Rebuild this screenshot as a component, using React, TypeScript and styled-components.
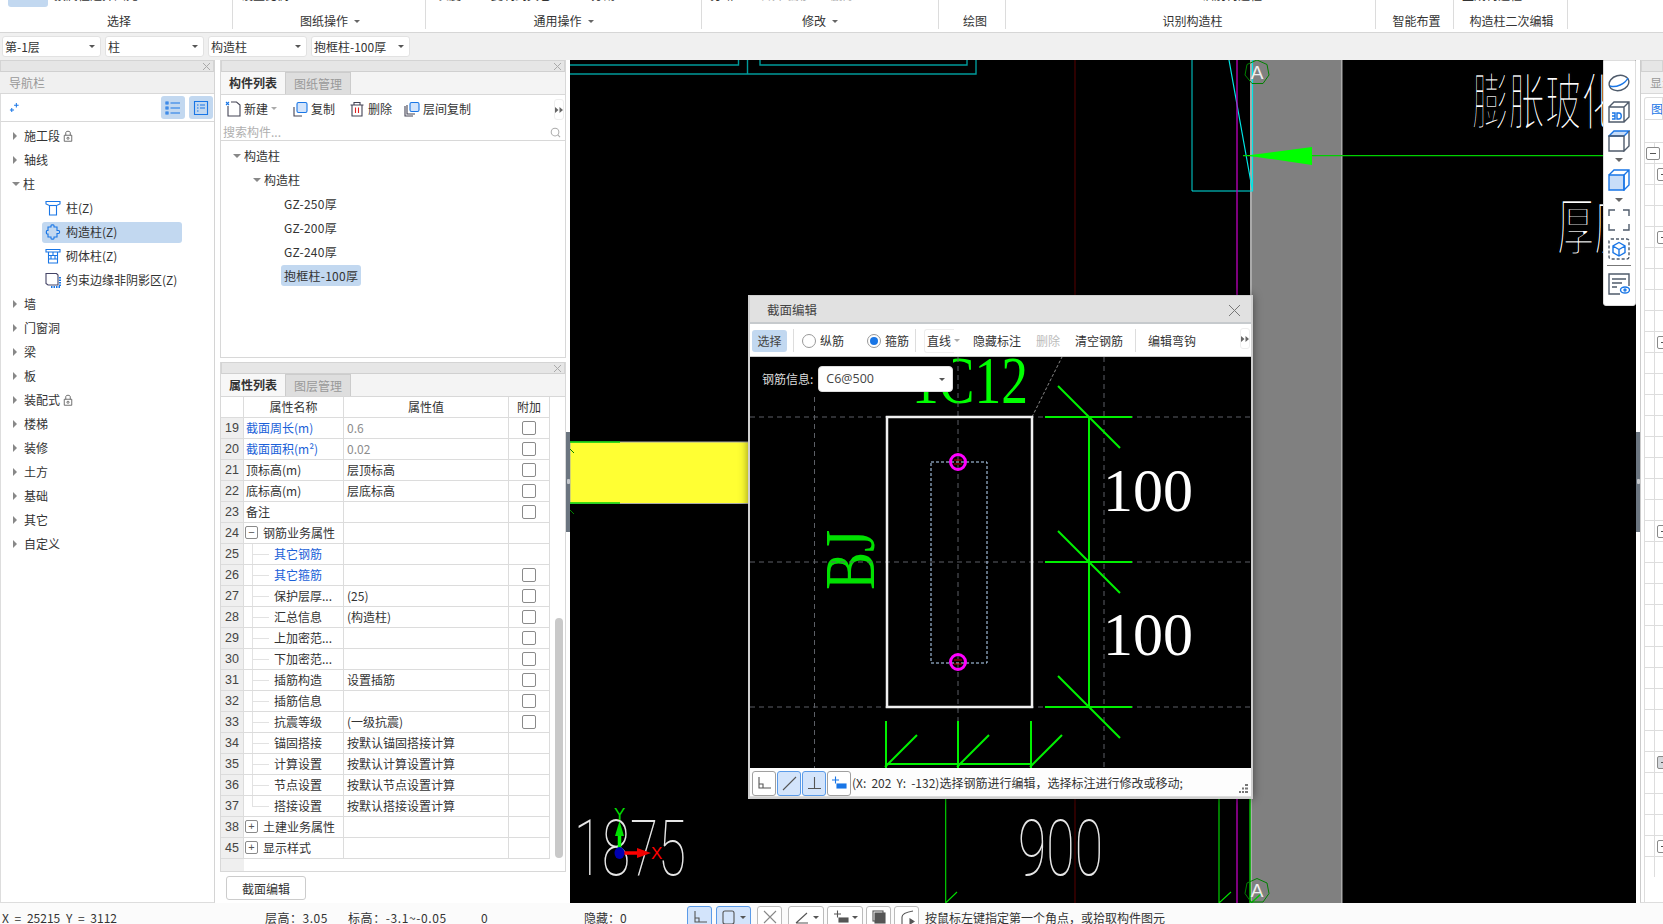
import React from "react";
import styled, { createGlobalStyle } from "styled-components";

const FONT = `"Noto Sans CJK SC", "Liberation Sans", sans-serif`;
const BLUE = "#1976e6";
const SLATE = "#4f5b6b";

const Global = createGlobalStyle`
  html, body { margin: 0; padding: 0; height: 100%; overflow: hidden; background: #fff; }
  #root { height: 100%; }
  * { box-sizing: border-box; }
`;

const Page = styled.div`
  width: 1663px; height: 924px; display: flex; flex-direction: column; overflow: hidden;
  font: 12px/18px ${FONT}; color: #333; background: #fff;
`;

/* ribbon */
const Ribbon = styled.div`
  height: 33px; flex: none; display: flex; background: #fff; border-bottom: 1px solid #d6d6d6;
  align-items: flex-start;
`;
const RibbonGroup = styled.div<{ $w: number }>`
  width: ${(p) => p.$w}px; height: 29px; flex: none; display: flex; flex-direction: column;
  border-right: 1px solid #dcdcdc;
`;
const RibbonClip = styled.div`
  height: 10px; overflow: hidden; display: flex; align-items: flex-start; flex: none;
`;
const RibbonFragment = styled.span<{ $l: number; $mute?: boolean }>`
  margin-left: ${(p) => p.$l}px; margin-top: -14px; line-height: 18px; white-space: nowrap;
  color: ${(p) => (p.$mute ? "#aaa" : "#333")}; height: 18px;
`;
const RibbonActive = styled.span`
  width: 40px; height: 7px; margin-left: 8px; background: #c2d8f0; border-radius: 0 0 3px 3px; flex: none;
`;
const RibbonLabel = styled.div<{ $nudge: number }>`
  height: 22px; line-height: 22px; text-align: center; color: #333; white-space: nowrap;
  display: flex; align-items: center; justify-content: center; gap: 6px;
  padding-left: ${(p) => p.$nudge}px;
`;
const Caret = styled.i<{ $c?: string; $s?: number }>`
  display: inline-block; width: 0; height: 0; flex: none;
  border-left: ${(p) => p.$s ?? 3}px solid transparent;
  border-right: ${(p) => p.$s ?? 3}px solid transparent;
  border-top: ${(p) => p.$s ?? 3}px solid ${(p) => p.$c ?? "#666"};
`;

/* selector bar */
const SelectBar = styled.div`
  height: 27px; flex: none; background: #f0f0f0; display: flex; gap: 4px; padding: 3px 0 3px 2px;
`;
const BarSelect = styled.div`
  width: 99px; height: 21px; background: #fff; border: 1px solid #e2e2e2; border-radius: 3px;
  display: flex; align-items: center; justify-content: space-between; padding: 0 5px 0 2px; color: #333;
`;

/* main */
const Main = styled.div`
  height: 843px; flex: none; display: flex; background: #fff;
`;
const PanelHead = styled.div`
  height: 12px; flex: none; background: #e6e6e6; border: 1px solid #d4d4d4; border-bottom-color: #d0d0d0;
  display: flex; align-items: center; justify-content: flex-end; padding-right: 3px;
`;
const CloseX = styled.svg`
  width: 7px; height: 7px; stroke: #aaa; stroke-width: 1; fill: none;
`;

/* navigator */
const Nav = styled.aside`
  width: 215px; flex: none; display: flex; flex-direction: column; border-right: 1px solid #d4d4d4;
  border-bottom: 1px solid #ddd;
`;
const NavTitle = styled.div`
  height: 22px; flex: none; background: #f0f0f0; color: #999; padding-left: 9px; line-height: 21px;
  border-bottom: 1px solid #d8d8d8;
`;
const NavTools = styled.div`
  height: 28px; flex: none; display: flex; align-items: center; padding: 0 1px 0 8px; gap: 4px;
  border-bottom: 1px solid #d8d8d8; border-left: 1px solid #ddd;
`;
const NavToolBtn = styled.div`
  width: 24px; height: 23px; background: #c2d8f0; border-radius: 3px; display: flex;
  align-items: center; justify-content: center;
`;
const Spacer = styled.div`flex: 1;`;
const NavTree = styled.div`
  padding-top: 2px; flex: 1; border-left: 1px solid #ddd;
`;
const NavRow = styled.div`
  height: 24px; display: flex; align-items: center; padding-left: 11px; white-space: nowrap; color: #333;
`;
const TreeArrow = styled.i<{ $open?: boolean }>`
  display: inline-block; width: 0; height: 0; flex: none;
  ${(p) =>
    p.$open
      ? `border-left: 4px solid transparent; border-right: 4px solid transparent; border-top: 4px solid #888; margin-right: 3px;`
      : `border-top: 4px solid transparent; border-bottom: 4px solid transparent; border-left: 4px solid #888; margin-right: 7px; margin-left: 1px;`}
`;
const NavLeafRow = styled.div`
  height: 24px; display: flex; align-items: center; padding-left: 41px;
`;
const NavLeaf = styled.div<{ $on?: boolean }>`
  width: 140px; height: 21px; display: flex; align-items: center; gap: 5px;
  padding-left: 3px; border-radius: 3px; white-space: nowrap;
  background: ${(p) => (p.$on ? "#c2d8f0" : "transparent")};
`;

/* middle */
const Middle = styled.section`
  width: 346px; margin-left: 5px; flex: none; display: flex; flex-direction: column;
`;
const ListPanel = styled.div`
  height: 298px; flex: none; display: flex; flex-direction: column;
  border: 1px solid #d8d8d8; border-top: 0;
`;
const Tabs = styled.div`
  height: 23px; flex: none; display: flex; border-bottom: 1px solid #d8d8d8; background: #f4f4f4;
`;
const Tab = styled.div<{ $on?: boolean }>`
  width: 65px; text-align: center; line-height: 21px;
  font-weight: ${(p) => (p.$on ? 700 : 400)};
  color: ${(p) => (p.$on ? "#333" : "#999")};
  background: ${(p) => (p.$on ? "#f7f7f7" : "#dedede")};
  border-right: 1px solid #ccc; ${(p) => (p.$on ? "" : "border-top: 1px solid #ccc;")}
`;
const ListTools = styled.div`
  height: 27px; flex: none; display: flex; align-items: center; padding-left: 4px;
  position: relative;
`;
const ToolItem = styled.div<{ $w: number }>`
  width: ${(p) => p.$w}px; display: flex; align-items: center; gap: 3px; flex: none; white-space: nowrap;
`;
const MoreBtn = styled.div`
  position: absolute; right: 1px; top: 4px; width: 10px; height: 21px; border: 1px solid #eee;
  border-radius: 3px; display: flex; align-items: center; justify-content: center; gap: 0; background: #fff;
`;
const MoreGlyph = styled.svg`
  width: 8px; height: 6px; fill: #666;
`;
const SearchRow = styled.div`
  height: 19px; flex: none; display: flex; align-items: center; justify-content: space-between;
  padding: 2px 4px 0 2px; border-bottom: 1px solid #d8d8d8; color: #b0b0b0;
`;
const CompTree = styled.div`
  flex: 1; padding-top: 3px;
`;
const CompRow = styled.div<{ $indent: number }>`
  height: 24px; display: flex; align-items: center; padding-left: ${(p) => p.$indent}px;
`;
const CompLabel = styled.span<{ $on?: boolean }>`
  height: 21px; line-height: 21px; padding: 0 3px; border-radius: 3px; letter-spacing: 0.25px; margin-top: -1px;
  background: ${(p) => (p.$on ? "#c2d8f0" : "transparent")};
`;

const PropPanel = styled.div`
  margin-top: 4px; height: 510px; flex: none; display: flex; flex-direction: column;
  border: 1px solid #d8d8d8; border-top: 0;
`;
const PropBody = styled.div`
  flex: 1; display: flex; min-height: 0;
`;
const PropTableWrap = styled.div`
  width: 329px; flex: none; display: flex; flex-direction: column;
`;
const PropGrid = styled.div`
  display: grid; grid-template-columns: 23px 100px 165px 41px;
`;
const Cell = styled.div`
  height: 21px; border-bottom: 1px solid #dcdcdc; border-right: 1px solid #dcdcdc;
  display: flex; align-items: center; white-space: nowrap; position: relative;
`;
const HeadCell = styled(Cell)`
  height: 20.5px; justify-content: center; color: #333;
`;
const NoCell = styled(Cell)`
  background: #efefef; justify-content: center; color: #444; font-size: 12.5px;
  font-family: "Liberation Sans", sans-serif;
`;
const NameCell = styled(Cell)<{ $level: number; $link?: boolean; $branch?: "mid" | "end" }>`
  padding-left: ${(p) => (p.$level === 2 ? 30 : 2)}px;
  color: ${(p) => (p.$link ? "#1a5fd8" : "#333")};
  ${(p) =>
    p.$branch
      ? `&::before { content: ""; position: absolute; left: 8px; top: 0; width: 17px;
         height: ${p.$branch === "end" ? "10px" : "100%"}; border-left: 1px solid #e2e2e2; }
         &::after { content: ""; position: absolute; left: 8px; top: 10px; width: 17px; border-top: 1px solid #e2e2e2; }`
      : ""}
`;
const ValueCell = styled(Cell)<{ $mute?: boolean }>`
  padding-left: 3px; color: ${(p) => (p.$mute ? "#8c8c8c" : "#333")};
`;
const CheckCell = styled(Cell)`
  justify-content: center;
`;
const CheckBox = styled.span`
  width: 14px; height: 14px; border: 1px solid #8a8a8a; border-radius: 2px; background: #fff;
`;
const ExpBox = styled.span`
  width: 13px; height: 13px; border: 1px solid #8a8a8a; border-radius: 2px; margin: 0 5px 0 -1px;
  display: flex; align-items: center; justify-content: center; font: 11px/11px "Liberation Sans", sans-serif;
  color: #555; flex: none;
`;
const PropFiller = styled.div`
  flex: 1;
`;
const PropFillerNo = styled.div`
  width: 23px; height: 100%; background: #efefef;
`;
const ScrollTrack = styled.div`
  width: 16px; flex: none; position: relative;
`;
const ScrollThumb = styled.div`
  position: absolute; left: 5px; width: 8px; top: 221px; height: 240px; background: #c9c9c9; border-radius: 4px;
`;
const EditBtn = styled.button`
  width: 80px; height: 24px; margin: 4px 0 0 6px; background: #fff; border: 1px solid #ccc; border-radius: 3px;
  font: 12px ${FONT}; color: #333; padding: 0;
`;

/* canvas */
const Splitter = styled.div`
  width: 4px; flex: none; display: flex; align-items: center;
`;
const SplitGrip = styled.div`
  width: 4px; height: 100px; background: #6b7580; display: flex; align-items: center; justify-content: center;
`;
const GripDot = styled.span`
  width: 3px; height: 5px; background: #c5c9cd; border-radius: 1px;
`;
const Canvas = styled.div`
  width: 1066px; flex: none; position: relative; background: #000; overflow: hidden;
`;
const CadLayer = styled.svg`
  position: absolute; left: 0; top: 0; width: 1066px; height: 843px; display: block;
`;
const CadThin = styled.text`
  font-family: Roboto, "Liberation Sans", sans-serif; font-weight: 100; fill: #e6e6e6;
`;
const CadCjk = styled.text`
  font-family: "Noto Sans CJK SC", sans-serif; fill: #fff; stroke: #000; stroke-width: 2.7px;
`;
const CadA = styled.text`
  font-family: "Liberation Sans", sans-serif; fill: #eee; font-size: 19px; text-anchor: middle;
`;
const AxisLabel = styled.text<{ $c: string }>`
  font-family: "Liberation Sans", sans-serif; fill: ${(p) => p.$c}; font-size: 17px;
`;

/* floating view tools */
const ViewTools = styled.div`
  position: absolute; right: 0; top: 0; width: 33px; height: 246px; background: #fff;
  border-radius: 0 0 3px 3px; border: 1px solid #ddd; display: flex; flex-direction: column; align-items: center;
  padding: 11px 1px 0 0; gap: 0;
`;
const ViewIcon = styled.svg<{ $mb: number; $accent?: boolean }>`
  width: 22px; height: 22px; margin-bottom: ${(p) => p.$mb}px; flex: none;
  fill: none; stroke: ${(p) => (p.$accent ? BLUE : SLATE)}; stroke-width: 1.4;
`;
const ViewCaret = styled.div`
  height: 5px; margin-bottom: 7px; display: flex; align-items: center;
`;
const ViewRule = styled.div`
  width: 24px; border-top: 1px solid #777; margin: 0 0 7px;
`;

/* dialog */
const Dialog = styled.div`
  position: absolute; left: 178px; top: 235px; width: 505px; height: 504px; display: flex; flex-direction: column;
  border: 2px solid #cfcfcf; border-top-width: 1px; border-right-width: 2px; background: #fff;
  box-shadow: 0 0 9px rgba(0, 0, 0, 0.45);
`;
const DialogTitle = styled.div`
  height: 28px; flex: none; background: #e1e1e1; display: flex; align-items: center; justify-content: space-between;
  padding: 2px 11px 0 17px; font-size: 12.5px; color: #444; border-bottom: 2px solid #c6cacd;
`;
const DialogClose = styled.svg`
  width: 11px; height: 11px; stroke: #777; stroke-width: 1; fill: none;
`;
const DialogTools = styled.div`
  height: 33px; flex: none; background: #fff; display: flex; align-items: center; position: relative; padding: 1px 0 0 2px;
  border-bottom: 1px solid #ccc;
`;
const DlgSelect = styled.div`
  width: 35px; height: 22px; background: #c2d8f0; border-radius: 3px; text-align: center; line-height: 22px; color: #444;
`;
const DlgSep = styled.div<{ $l: number }>`
  width: 1px; height: 23px; background: #ddd; margin-left: ${(p) => p.$l}px; flex: none;
`;
const Radio = styled.span<{ $on?: boolean; $l: number }>`
  width: 14px; height: 14px; border: 1px solid #999; border-radius: 50%; margin-left: ${(p) => p.$l}px;
  margin-right: 4px; display: flex; align-items: center; justify-content: center; flex: none; background: #fff;
  &::after { content: ""; width: 8px; height: 8px; border-radius: 50%; background: ${(p) => (p.$on ? BLUE : "transparent")}; }
`;
const DlgText = styled.span<{ $l?: number; $off?: boolean }>`
  margin-left: ${(p) => p.$l ?? 0}px; white-space: nowrap; color: ${(p) => (p.$off ? "#bbb" : "#333")}; flex: none;
`;
const DlgLineBtn = styled.div`
  margin-left: 8px; width: 30px; height: 24px; border: 1px solid #eee; border-right: 0; border-radius: 3px 0 0 3px;
  display: flex; align-items: center; padding-left: 2px; gap: 3px; white-space: nowrap; flex: none; overflow: visible;
`;
const DlgArea = styled.div`
  flex: 1; background: #000; position: relative; min-height: 0;
`;
const DlgLayer = styled.svg`
  position: absolute; left: 0; top: 0; width: 501px; height: 411px; display: block;
`;
const RebarInfo = styled.div`
  position: absolute; left: 0; top: 0; padding: 9px 0 0 12px; background: #000;
  display: flex; align-items: center; gap: 5px; color: #ddd;
`;
const RebarSelect = styled.div`
  width: 135px; height: 26px; background: #fff; border-radius: 4px; border: 1px solid #ddd; color: #444;
  display: flex; align-items: center; justify-content: space-between; padding: 0 7px; font-size: 12.5px;
  font-family: "Open Sans", "Liberation Sans", sans-serif;
`;
const DlgStatus = styled.div`
  height: 29px; flex: none; background: #fdfdfd; display: flex; align-items: center; padding: 2px 2px 0 2px; gap: 1px;
  position: relative; border-bottom: 1px solid #ddd;
`;
const SnapBtn = styled.div<{ $on?: boolean }>`
  width: 24px; height: 25px; border: 1px solid ${(p) => (p.$on ? "#5b9be8" : "#a0a0a0")}; border-radius: 3px;
  background: ${(p) => (p.$on ? "#d3e4fb" : "#fff")}; display: flex; align-items: center; justify-content: center; flex: none;
`;
const SnapText = styled.span`
  white-space: nowrap; color: #333; word-spacing: 2.5px;
`;
const Grip = styled.svg`
  position: absolute; right: 3px; bottom: 3px; width: 9px; height: 9px; fill: #777;
`;

/* right panel */
const RightPanel = styled.aside`
  flex: 1; display: flex; flex-direction: column; border-left: 1px solid #ccc; overflow: hidden; border-bottom: 1px solid #ddd;
`;
const RightTitle = styled.div`
  height: 22px; flex: none; background: #f0f0f0; color: #999; padding-left: 9px; line-height: 21px; white-space: nowrap;
  border-bottom: 1px solid #d8d8d8;
`;
const RightTab = styled.div`
  margin: 3px 0 0 3px; height: 22px; flex: none; border: 1px solid #ddd; border-bottom: 0; border-radius: 3px 0 0 0;
  color: ${BLUE}; padding-left: 6px; line-height: 22px; white-space: nowrap; overflow: hidden;
`;
const RightBody = styled.div`
  flex: 1; margin-left: 3px; border-left: 1px solid #ddd; border-top: 1px solid #ddd; padding-top: 22px; overflow: hidden;
`;
const RightRow = styled.div`
  height: 21px; border-top: 1px solid #ddd; position: relative; display: flex; align-items: center;
  &::before { content: ""; position: absolute; left: 9px; top: 0; bottom: 0; border-left: 1px solid #ddd; }
`;
const RightBox = styled.span<{ $level: number; $on?: boolean }>`
  width: 14px; height: 13px; flex: none; position: relative; z-index: 1; margin-left: ${(p) => (p.$level ? 12 : 1)}px;
  border: 1px solid #8a8a8a; border-radius: 2px; background: ${(p) => (p.$on ? "#d5d8dc" : "#fff")};
  display: flex; align-items: center; justify-content: center;
  &::after { content: ""; width: 6px; border-top: 1px solid #555; }
`;

/* status bar */
const StatusBar = styled.footer`
  height: 21px; flex: none; background: #fbfbfb; display: flex; position: relative; overflow: hidden; align-items: flex-start;
`;
const StatusText = styled.span<{ $w: number; $l?: number; $words?: number; $track?: number }>`
  width: ${(p) => p.$w}px; flex: none; white-space: nowrap; line-height: 30px; color: #333;
  padding-left: ${(p) => p.$l ?? 0}px; word-spacing: ${(p) => p.$words ?? 0}px;
  letter-spacing: ${(p) => p.$track ?? 0}px;
`;
const StatusBtn = styled.div<{ $w: number; $on?: boolean; $l: number }>`
  width: ${(p) => p.$w}px; height: 24px; margin: 3px 0 0 ${(p) => p.$l}px; flex: none; border-radius: 3px;
  border: 1px solid ${(p) => (p.$on ? "#5b9be8" : "#bbb")};
  background: ${(p) => (p.$on ? "#d3e4fb" : "#fff")};
  display: flex; align-items: center; justify-content: center; gap: 3px; padding-bottom: 2px;
`;
const SmallIcon = styled.svg<{ $c?: string; $size?: number }>`
  width: ${(p) => p.$size ?? 16}px; height: ${(p) => p.$size ?? 16}px; flex: none; fill: none;
  stroke: ${(p) => p.$c ?? "#555"}; stroke-width: 1.1;
`;
const LockWrap = styled.span`
  display: inline-flex; margin-left: 2px;
`;

/* ---------- data ---------- */
const navTop = ["施工段", "轴线"];
const navBottom = ["墙", "门窗洞", "梁", "板", "装配式", "楼梯", "装修", "土方", "基础", "其它", "自定义"];
type PropRow = {
  no: number; name: string; value?: string; check?: boolean; level: 1 | 2; link?: boolean; mute?: boolean;
  exp?: "+" | "-"; branch?: "mid" | "end";
};
const props: PropRow[] = [
  { no: 19, name: "截面周长(m)", value: "0.6", check: true, level: 1, link: true, mute: true },
  { no: 20, name: "截面面积(m²)", value: "0.02", check: true, level: 1, link: true, mute: true },
  { no: 21, name: "顶标高(m)", value: "层顶标高", check: true, level: 1 },
  { no: 22, name: "底标高(m)", value: "层底标高", check: true, level: 1 },
  { no: 23, name: "备注", check: true, level: 1 },
  { no: 24, name: "钢筋业务属性", level: 1, exp: "-" },
  { no: 25, name: "其它钢筋", level: 2, link: true, branch: "mid" },
  { no: 26, name: "其它箍筋", check: true, level: 2, link: true, branch: "mid" },
  { no: 27, name: "保护层厚...", value: "(25)", check: true, level: 2, branch: "mid" },
  { no: 28, name: "汇总信息", value: "(构造柱)", check: true, level: 2, branch: "mid" },
  { no: 29, name: "上加密范...", check: true, level: 2, branch: "mid" },
  { no: 30, name: "下加密范...", check: true, level: 2, branch: "mid" },
  { no: 31, name: "插筋构造", value: "设置插筋", check: true, level: 2, branch: "mid" },
  { no: 32, name: "插筋信息", check: true, level: 2, branch: "mid" },
  { no: 33, name: "抗震等级", value: "(一级抗震)", check: true, level: 2, branch: "mid" },
  { no: 34, name: "锚固搭接", value: "按默认锚固搭接计算", level: 2, branch: "mid" },
  { no: 35, name: "计算设置", value: "按默认计算设置计算", level: 2, branch: "mid" },
  { no: 36, name: "节点设置", value: "按默认节点设置计算", level: 2, branch: "mid" },
  { no: 37, name: "搭接设置", value: "按默认搭接设置计算", level: 2, branch: "end" },
  { no: 38, name: "土建业务属性", level: 1, exp: "+" },
  { no: 45, name: "显示样式", level: 1, exp: "+" },
];
const ribbon: { w: number; label: string; nudge: number; caret?: boolean; bits: { l: number; t: string; m?: boolean }[]; active?: boolean }[] = [
  { w: 233, label: "选择", nudge: 6, active: true, bits: [{ l: 6, t: "按属性选择图元" }] },
  { w: 193, label: "图纸操作", nudge: 2, caret: true, bits: [{ l: 8, t: "设置比例" }] },
  { w: 276, label: "通用操作", nudge: 0, caret: true, bits: [{ l: 11, t: "长度" }, { l: 30, t: "复制到其它" }, { l: 40, t: "分割" }] },
  { w: 237, label: "修改", nudge: 0, caret: true, bits: [{ l: 8, t: "打断" }, { l: 26, t: "合并  偏移", m: true }, { l: 20, t: "删除", m: true }] },
  { w: 67, label: "绘图", nudge: 6, bits: [] },
  { w: 370, label: "识别构造柱", nudge: 4, bits: [{ l: 196, t: "识别构造柱" }] },
  { w: 78, label: "智能布置", nudge: 4, bits: [] },
  { w: 114, label: "构造柱二次编辑", nudge: 2, bits: [{ l: 8, t: "生成构造柱" }] },
];
const rightBoxes: Record<number, { level: number; on?: boolean }> = {
  0: { level: 0 }, 1: { level: 1 }, 4: { level: 1 }, 9: { level: 1 }, 18: { level: 1 },
  29: { level: 1, on: true }, 33: { level: 1 },
};

/* ---------- icons ---------- */
const Close = () => (
  <CloseX viewBox="0 0 7 7"><path d="M0 0L7 7M7 0L0 7" /></CloseX>
);
const More = () => (
  <MoreGlyph viewBox="0 0 8 6"><path d="M0 0L3.5 3L0 6zM4.5 0L8 3L4.5 6z" /></MoreGlyph>
);
const ColumnIcon = () => (
  <SmallIcon viewBox="0 0 16 16" $c={BLUE}><path d="M1 1.5H15V4L11.5 5.5V15H4.5V5.5L1 4z" /><path d="M4.5 5.5H11.5" /></SmallIcon>
);
const GearIcon = () => (
  <SmallIcon viewBox="0 0 16 16" $c={BLUE}>
    <path d="M6 1.5C6 .5 9 .5 9 1.5V3H12V6.5H13.5C15 6.5 15 9.5 13.5 9.5H12V13H9V14.5C9 15.5 6 15.5 6 14.5V13H3V10H2C1 10 1 6.5 2 6.5H3V3H6z" />
  </SmallIcon>
);
const MasonryIcon = () => (
  <SmallIcon viewBox="0 0 16 16" $c={BLUE}><path d="M1 1.5H15V4H1zM3.5 4V15H12.5V4M3.5 7.5H12.5M3.5 11H12.5M8 4V7.5M6 7.5V11M10 7.5V11" /></SmallIcon>
);
const EdgeIcon = () => (
  <SmallIcon viewBox="0 0 16 16" $c="#446"><path d="M1 1.5H11.5L13 3V13H3L1 11.5z" /><path d="M6 15H15V5" stroke={BLUE} strokeWidth="2" strokeDasharray="1.5 1" /></SmallIcon>
);
const Lock = () => (
  <LockWrap>
    <SmallIcon viewBox="0 0 16 16" $c="#555" $size={12}><path d="M3 7H13V15H3zM5 7V3.5C5 1 11 1 11 3.5V7" /><circle cx="8" cy="11" r="1.4" /></SmallIcon>
  </LockWrap>
);

/* ---------- page ---------- */
const CadDrawing = () => (
  <CadLayer viewBox="570 60 1066 843">
    <rect x="1250" y="60" width="92" height="843" fill="#808080" />
    <rect x="1250" y="60" width="2" height="843" fill="#aaa" />
    <rect x="1341" y="60" width="1.5" height="843" fill="#aaa" />
    <rect x="570" y="442" width="180" height="61.5" fill="#ffff33" stroke="#aaa" />
    <g stroke="#00d800" strokeWidth="1.5" fill="none">
      <path d="M570 442H620M570 503H620" />
    </g>
    <path d="M570 449L574 453M570 510L574 514" stroke="#008000" strokeWidth="1" />
    <g fill="none" stroke="#009a9a" strokeWidth="1.4">
      <path d="M570 74H976V60M747.5 60V74M570 65H738.5V60M760 60V65H967V60M1192 60V191" />
    </g>
    <path d="M1192 191H1252.5V60M1229 60L1252.5 191" fill="none" stroke="#00e6e6" strokeWidth="1.2" />
    <path d="M1075 60V903" stroke="#400000" strokeWidth="1.4" />

    <CadCjk x="1472" y="125" fontSize="62" textLength="146" lengthAdjust="spacingAndGlyphs">膨胀玻化</CadCjk>
    <CadCjk x="1557" y="250" fontSize="62" textLength="74" lengthAdjust="spacingAndGlyphs">厚度</CadCjk>
    <CadThin x="1018" y="875" fontSize="77" textLength="85" lengthAdjust="spacingAndGlyphs">900</CadThin>
    <CadThin x="574" y="875" fontSize="77" textLength="112" lengthAdjust="spacingAndGlyphs">1875</CadThin>

    <path d="M1237 60V903" stroke="#c000c0" strokeWidth="1.3" />
    <path d="M1243 155.7H1603" stroke="#00d000" strokeWidth="1.2" />
    <path d="M1247 155.5L1312 147V165z" fill="#00ff00" />
    <path d="M945.7 799V903M945.7 903L957 892M1219 799V903M1219 903L1231 892" stroke="#00e000" strokeWidth="1.1" fill="none" />
    <path d="M1250 799V903" stroke="#00b000" strokeWidth="1.6" />
    <path d="M1251 903L1262 893" stroke="#00c000" strokeWidth="1.4" />

    <path d="M1257 60L1267 64.5L1269 75L1263 83.5L1252 83.5L1245 75L1247 64.5z" fill="none" stroke="#008000" />
    <CadA x="1257" y="79">A</CadA>
    <path d="M1257 878.5L1267 883L1269 893.5L1263 902L1251 902L1245 893.5L1247 883z" fill="none" stroke="#008000" />
    <CadA x="1257" y="897">A</CadA>

    <path d="M619.5 852V830" stroke="#00ff00" strokeWidth="3.5" />
    <path d="M619.5 821L624 836H615z" fill="#00e000" />
    <AxisLabel x="614" y="820" $c="#00e000">Y</AxisLabel>
    <path d="M620 853H640" stroke="#ff0000" strokeWidth="3.5" />
    <path d="M651 853L637 848V858z" fill="#f00000" />
    <AxisLabel x="651" y="859" $c="#ff0000">X</AxisLabel>
    <ellipse cx="619.5" cy="853" rx="5" ry="6" fill="#0000b0" />
  </CadLayer>
);

const DialogDrawing = () => (
  <DlgLayer viewBox="750 357 501 411">
    <text x="912" y="403" fontSize="68" textLength="116" lengthAdjust="spacingAndGlyphs" fill="#00ff00" fontFamily="'Liberation Serif', serif">1C12</text>
    <text transform="translate(874 590) rotate(-90)" fontSize="72" fill="#00e000" fontFamily="'Liberation Serif', serif" textLength="60" lengthAdjust="spacingAndGlyphs">BJ</text>
    <text x="1103" y="511" fontSize="62" textLength="90" lengthAdjust="spacingAndGlyphs" fill="#fff" fontFamily="'Liberation Serif', serif">100</text>
    <text x="1103" y="655" fontSize="62" textLength="90" lengthAdjust="spacingAndGlyphs" fill="#fff" fontFamily="'Liberation Serif', serif">100</text>
    <g stroke="#5c5f66" strokeDasharray="5 4" fill="none" strokeWidth="1">
      <path d="M750 417H1251M750 562H1251M750 707H1251" />
      <path d="M814.5 397V768M958 357V768M1104 357V768" />
    </g>
    <path d="M1032 417L1062 357" stroke="#888" strokeDasharray="3 2" />
    <g stroke="#00f000" strokeWidth="2" fill="none">
      <path d="M1089 417V707M1045 417H1132M1045 562H1132M1045 707H1132" />
      <path d="M1058 386L1120 448M1058 531L1120 593M1058 676L1120 738" />
      <path d="M886 721V768M958 721V768M1031 721V768M886 764H1031" />
      <path d="M885 767L917 735M957 767L989 735M1030 767L1062 735" />
    </g>
    <rect x="887" y="417" width="145" height="290" fill="none" stroke="#f0f0f0" strokeWidth="2.5" />
    <rect x="931" y="462" width="56" height="201" fill="none" stroke="#bcdcff" strokeDasharray="3 2" />
    <circle cx="958" cy="462" r="7.5" fill="none" stroke="#ff00ff" strokeWidth="3" />
    <circle cx="958" cy="662" r="7.5" fill="none" stroke="#ff00ff" strokeWidth="3" />
    <path d="M954 460H962M954 464H962M954 660H962M954 664H962" stroke="#c00000" strokeWidth="1" />
  </DlgLayer>
);

const SnapIcons = [
  <path key="a" d="M3 2V13H15M3 9H7V13" />,
  <path key="b" d="M2 15L15 2M7 10" />,
  <path key="c" d="M8.5 2V13M2 13.5H15" />,
];

export default function App() {
  return (
    <Page>
      <Global />
      <Ribbon>
        {ribbon.map((g) => (
          <RibbonGroup key={g.label} $w={g.w}>
            <RibbonClip>
              {g.active && <RibbonActive />}
              {g.bits.map((b) => (
                <RibbonFragment key={b.t} $l={b.l} $mute={b.m}>{b.t}</RibbonFragment>
              ))}
            </RibbonClip>
            <RibbonLabel $nudge={g.nudge}>
              {g.label}
              {g.caret && <Caret />}
            </RibbonLabel>
          </RibbonGroup>
        ))}
      </Ribbon>

      <SelectBar>
        {["第-1层", "柱", "构造柱", "抱框柱-100厚"].map((t) => (
          <BarSelect key={t}>
            {t}
            <Caret $c="#555" />
          </BarSelect>
        ))}
      </SelectBar>

      <Main>
        <Nav>
          <PanelHead><Close /></PanelHead>
          <NavTitle>导航栏</NavTitle>
          <NavTools>
            <SmallIcon viewBox="0 0 12 12" $c={BLUE} $size={11}><path d="M8 1V6M5.5 3.5H10.5M3 6.5V11M1 8.8H5.5" /></SmallIcon>
            <Spacer />
            <NavToolBtn>
              <SmallIcon viewBox="0 0 16 16" $c={BLUE}><path d="M5.5 3H15M5.5 8H15M5.5 13H15M1 2h2v2H1zM1 7h2v2H1zM1 12h2v2H1z" /></SmallIcon>
            </NavToolBtn>
            <NavToolBtn>
              <SmallIcon viewBox="0 0 16 16" $c={BLUE}><path d="M1.5 1.5H14.5V14.5H1.5zM4 5H5.5M7 5H12M4 8H5.5M7 8H12M4 11H5.5" /></SmallIcon>
            </NavToolBtn>
          </NavTools>
          <NavTree>
            {navTop.map((t) => (
              <NavRow key={t}><TreeArrow />{t}{t === "施工段" && <Lock />}</NavRow>
            ))}
            <NavRow><TreeArrow $open />柱</NavRow>
            <NavLeafRow><NavLeaf><ColumnIcon />柱(Z)</NavLeaf></NavLeafRow>
            <NavLeafRow><NavLeaf $on><GearIcon />构造柱(Z)</NavLeaf></NavLeafRow>
            <NavLeafRow><NavLeaf><MasonryIcon />砌体柱(Z)</NavLeaf></NavLeafRow>
            <NavLeafRow><NavLeaf><EdgeIcon />约束边缘非阴影区(Z)</NavLeaf></NavLeafRow>
            {navBottom.map((t) => (
              <NavRow key={t}><TreeArrow />{t}{t === "装配式" && <Lock />}</NavRow>
            ))}
          </NavTree>
        </Nav>

        <Middle>
          <ListPanel>
            <PanelHead><Close /></PanelHead>
            <Tabs>
              <Tab $on>构件列表</Tab>
              <Tab>图纸管理</Tab>
            </Tabs>
            <ListTools>
              <ToolItem $w={67}>
                <SmallIcon viewBox="0 0 16 16" $c="#445"><path d="M3 5V15H15V4L11.5 1H6" /><path d="M1 1L4 4M4 1L1 4" stroke={BLUE} /></SmallIcon>
                新建<Caret $c="#aaa" />
              </ToolItem>
              <ToolItem $w={57}>
                <SmallIcon viewBox="0 0 16 16" $c="#445"><path d="M2 6V15H10" /><rect x="5" y="1.5" width="10" height="10" rx="1.5" fill="#d3e4fb" stroke={BLUE} /></SmallIcon>
                复制
              </ToolItem>
              <ToolItem $w={55}>
                <SmallIcon viewBox="0 0 16 16" $c="#445"><path d="M1.5 4H14.5M5 4V1.5H11V4M3 4V15H13V4" /><path d="M6.5 6.5V12M9.5 6.5V12" stroke="#e02020" /></SmallIcon>
                删除
              </ToolItem>
              <ToolItem $w={90}>
                <SmallIcon viewBox="0 0 16 16" $c="#445"><path d="M1 5V15H9M3 4V13H11" /><rect x="6" y="1.5" width="9" height="9" rx="1.5" fill="#d3e4fb" stroke={BLUE} /></SmallIcon>
                层间复制
              </ToolItem>
              <MoreBtn><More /></MoreBtn>
            </ListTools>
            <SearchRow>
              搜索构件...
              <SmallIcon viewBox="0 0 12 12" $c="#aaa" $size={11}><circle cx="5.5" cy="5.5" r="4.2" /><path d="M8.5 8.5L11 11" /></SmallIcon>
            </SearchRow>
            <CompTree>
              <CompRow $indent={12}><TreeArrow $open />构造柱</CompRow>
              <CompRow $indent={32}><TreeArrow $open />构造柱</CompRow>
              <CompRow $indent={60}><CompLabel>GZ-250厚</CompLabel></CompRow>
              <CompRow $indent={60}><CompLabel>GZ-200厚</CompLabel></CompRow>
              <CompRow $indent={60}><CompLabel>GZ-240厚</CompLabel></CompRow>
              <CompRow $indent={60}><CompLabel $on>抱框柱-100厚</CompLabel></CompRow>
            </CompTree>
          </ListPanel>

          <PropPanel>
            <PanelHead><Close /></PanelHead>
            <Tabs>
              <Tab $on>属性列表</Tab>
              <Tab>图层管理</Tab>
            </Tabs>
            <PropBody>
              <PropTableWrap>
                <PropGrid>
                  <HeadCell />
                  <HeadCell>属性名称</HeadCell>
                  <HeadCell>属性值</HeadCell>
                  <HeadCell>附加</HeadCell>
                  {props.map((r) => (
                    <React.Fragment key={r.no}>
                      <NoCell>{r.no}</NoCell>
                      <NameCell $level={r.level} $link={r.link} $branch={r.branch}>
                        {r.exp && <ExpBox>{r.exp === "-" ? "−" : "+"}</ExpBox>}
                        {r.name}
                      </NameCell>
                      <ValueCell $mute={r.mute}>{r.value}</ValueCell>
                      <CheckCell>{r.check && <CheckBox />}</CheckCell>
                    </React.Fragment>
                  ))}
                </PropGrid>
                <PropFiller><PropFillerNo /></PropFiller>
              </PropTableWrap>
              <ScrollTrack><ScrollThumb /></ScrollTrack>
            </PropBody>
          </PropPanel>
          <EditBtn>截面编辑</EditBtn>
        </Middle>

        <Splitter><SplitGrip><GripDot /></SplitGrip></Splitter>

        <Canvas>
          <CadDrawing />
          <ViewTools>
            <ViewIcon $mb={7} viewBox="0 0 22 22"><ellipse cx="11" cy="11" rx="10" ry="7.5" transform="rotate(-15 11 11)" /><path d="M2 14C8 16 17 12 20 6" stroke={BLUE} /></ViewIcon>
            <ViewIcon $mb={7} viewBox="0 0 22 22"><path d="M1 6H16V21H1zM1 6L6 1H21V16L16 21M16 6L21 1" /><path d="M4 12H7V18H4M7 15H4M9 12V18H11C14 18 14 12 11 12z" stroke={BLUE} /></ViewIcon>
            <ViewIcon $mb={5} viewBox="0 0 22 22"><path d="M1 6L6 1H21L16 6z" fill="#c8ddf8" stroke={BLUE} /><path d="M1 6H16V21H1zM16 6V21L21 16V1" /></ViewIcon>
            <ViewCaret><Caret $c="#666" $s={4} /></ViewCaret>
            <ViewIcon $mb={6} viewBox="0 0 22 22" $accent><path d="M1 6H16V21H1z" fill="#c8ddf8" /><path d="M1 6L6 1H21V16L16 21V6L21 1" /></ViewIcon>
            <ViewCaret><Caret $c="#666" $s={4} /></ViewCaret>
            <ViewIcon $mb={7} viewBox="0 0 22 22"><path d="M1 7V1H7M15 1H21V7M1 15V21H7M15 21H21V15" /></ViewIcon>
            <ViewIcon $mb={5} viewBox="0 0 22 22"><rect x="1" y="1" width="20" height="20" rx="2" strokeDasharray="3 2" /><path d="M11 4.5L17 8V14.5L11 18L5 14.5V8zM5 8L11 11.5L17 8M11 11.5V18" stroke={BLUE} /></ViewIcon>
            <ViewRule />
            <ViewIcon $mb={0} viewBox="0 0 22 22"><path d="M12 21H1V1H21V13" /><path d="M4 6H18M4 10H14M4 14H9" /><ellipse cx="17" cy="17" rx="4.5" ry="3" stroke={BLUE} /><circle cx="17" cy="17" r="1" stroke={BLUE} /></ViewIcon>
          </ViewTools>

          <Dialog>
            <DialogTitle>
              截面编辑
              <DialogClose viewBox="0 0 11 11"><path d="M0 0L11 11M11 0L0 11" /></DialogClose>
            </DialogTitle>
            <DialogTools>
              <DlgSelect>选择</DlgSelect>
              <DlgSep $l={6} />
              <Radio $l={8} />
              <DlgText>纵筋</DlgText>
              <Radio $l={23} $on />
              <DlgText>箍筋</DlgText>
              <DlgSep $l={6} />
              <DlgLineBtn>直线<Caret $c="#aaa" /></DlgLineBtn>
              <DlgText $l={19}>隐藏标注</DlgText>
              <DlgText $l={15} $off>删除</DlgText>
              <DlgText $l={15}>清空钢筋</DlgText>
              <DlgSep $l={12} />
              <DlgText $l={12}>编辑弯钩</DlgText>
              <MoreBtn><More /></MoreBtn>
            </DialogTools>
            <DlgArea>
              <DialogDrawing />
              <RebarInfo>
                钢筋信息:
                <RebarSelect>C6@500<Caret $c="#555" /></RebarSelect>
              </RebarInfo>
            </DlgArea>
            <DlgStatus>
              <SnapBtn><SmallIcon viewBox="0 0 16 16">{SnapIcons[0]}</SmallIcon></SnapBtn>
              <SnapBtn $on><SmallIcon viewBox="0 0 16 16">{SnapIcons[1]}</SmallIcon></SnapBtn>
              <SnapBtn $on><SmallIcon viewBox="0 0 16 16">{SnapIcons[2]}</SmallIcon></SnapBtn>
              <SnapBtn>
                <SmallIcon viewBox="0 0 16 16" $c={BLUE}><path d="M1 5H8M4.5 1.5V8.5" /><rect x="6" y="9" width="9" height="4" fill={BLUE} /></SmallIcon>
              </SnapBtn>
              <SnapText>(X: 202 Y: -132)选择钢筋进行编辑，选择标注进行修改或移动;</SnapText>
              <Grip viewBox="0 0 9 9"><path d="M6 0h3v2H6zM3 3.5h2v2H3zM6 3.5h3v2H6zM0 7h2v2H0zM3 7h2v2H3zM6 7h3v2H6z" /></Grip>
            </DlgStatus>
          </Dialog>
        </Canvas>

        <Splitter><SplitGrip><GripDot /></SplitGrip></Splitter>

        <RightPanel>
          <PanelHead />
          <RightTitle>显示设置</RightTitle>
          <RightTab>图层</RightTab>
          <RightBody>
            {Array.from({ length: 35 }, (_, i) => (
              <RightRow key={i}>
                {rightBoxes[i] && <RightBox $level={rightBoxes[i].level} $on={rightBoxes[i].on} />}
              </RightRow>
            ))}
          </RightBody>
        </RightPanel>
      </Main>

      <StatusBar>
        <StatusText $w={265} $l={2} $words={3}>X = 25215 Y = 3112</StatusText>
        <StatusText $w={83} $track={0.5}>层高：3.05</StatusText>
        <StatusText $w={133} $track={0.6}>标高：-3.1~-0.05</StatusText>
        <StatusText $w={103}>0</StatusText>
        <StatusText $w={103}>隐藏：0</StatusText>
        <StatusBtn $w={25} $l={0} $on><SmallIcon viewBox="0 0 16 16">{SnapIcons[0]}</SmallIcon></StatusBtn>
        <StatusBtn $w={35} $l={4} $on><SmallIcon viewBox="0 0 16 16"><rect x="2" y="2" width="11" height="13" rx="2" /></SmallIcon><Caret $c="#555" /></StatusBtn>
        <StatusBtn $w={25} $l={6}><SmallIcon viewBox="0 0 16 16" $c="#888"><path d="M2 2L14 14M14 2L2 14" /></SmallIcon></StatusBtn>
        <StatusBtn $w={36} $l={6}><SmallIcon viewBox="0 0 16 16"><path d="M2 14L13 4M2 14H14" /></SmallIcon><Caret $c="#555" /></StatusBtn>
        <StatusBtn $w={36} $l={3}><SmallIcon viewBox="0 0 16 16"><path d="M1 5H8M4.5 1.5V8.5" /><rect x="6" y="9" width="9" height="4" fill="#555" /></SmallIcon><Caret $c="#555" /></StatusBtn>
        <StatusBtn $w={25} $l={3}><SmallIcon viewBox="0 0 16 16"><rect x="2" y="2" width="10" height="10" /><rect x="4" y="4" width="10" height="10" fill="#555" /></SmallIcon></StatusBtn>
        <StatusBtn $w={25} $l={3}><SmallIcon viewBox="0 0 16 16"><path d="M3 15V8C3 5 8 3 14 2" /><path d="M11 10L15 12.5L11 15z" fill="#555" /></SmallIcon></StatusBtn>
        <StatusText $w={300} $l={6}>按鼠标左键指定第一个角点，或拾取构件图元</StatusText>
      </StatusBar>
    </Page>
  );
}
